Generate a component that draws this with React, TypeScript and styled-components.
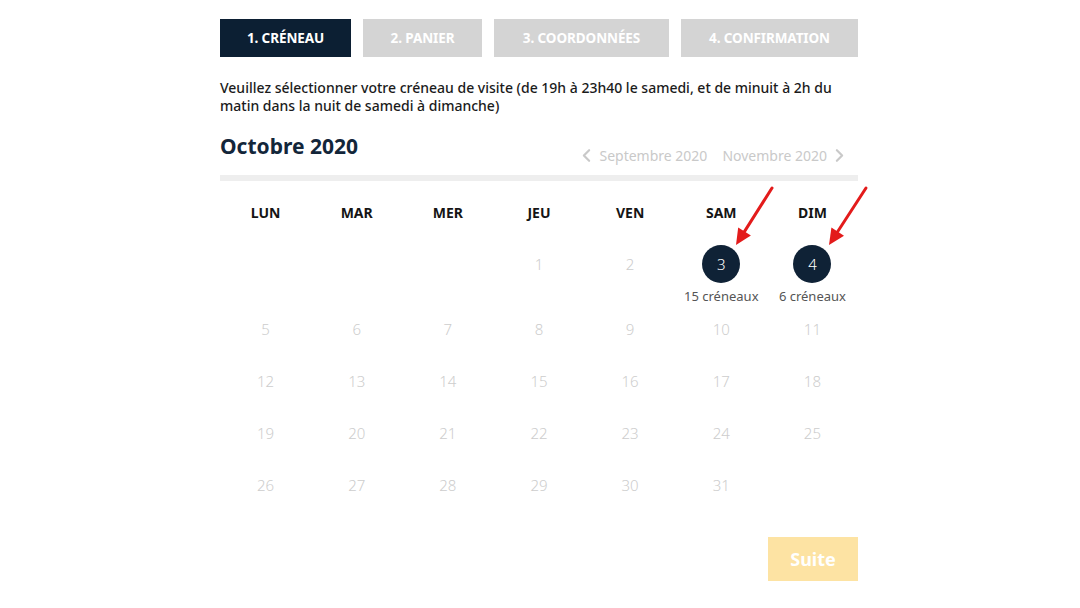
import React from "react";
import styled, { createGlobalStyle } from "styled-components";
import { ChevronLeft, ChevronRight } from "lucide-react";

const Global = createGlobalStyle`
  html, body { margin: 0; padding: 0; background: #ffffff; }
  body { font-family: "Noto Sans", "Open Sans", sans-serif; color: #1d1d1d; }
`;

const Page = styled.div`
  position: relative;
  width: 638px;
  margin-left: 220px;
  padding-top: 19px;
`;

const Steps = styled.div`
  display: flex;
  gap: 12px;
`;

const Step = styled.div<{ $w: number; $active?: boolean }>`
  width: ${(p) => p.$w}px;
  height: 38px;
  display: flex;
  align-items: center;
  justify-content: center;
  background: ${(p) => (p.$active ? "#0c1f33" : "#d4d4d4")};
  color: #ffffff;
  font-size: 13.5px;
  font-weight: 700;
  letter-spacing: -0.1px;
  text-transform: uppercase;
`;

const Intro = styled.p`
  margin: 22px 0 0;
  font-size: 14px;
  line-height: 18px;
  font-weight: 500;
  color: #1b1b1b;
  letter-spacing: 0;
  white-space: nowrap;
`;

const Header = styled.div`
  display: flex;
  justify-content: space-between;
  align-items: flex-end;
  margin-top: 19px;
`;

const Month = styled.h2`
  margin: 0;
  font-size: 21px;
  line-height: 24px;
  font-weight: 700;
  color: #13263a;
`;

const Nav = styled.div`
  display: flex;
  align-items: center;
  margin-bottom: -8px;
  margin-right: 8px;
  color: #c9c9c9;
  font-size: 14px;
  line-height: 18px;
`;

const NavLink = styled.span<{ $gap?: number }>`
  display: inline-flex;
  align-items: center;
  gap: 2px;
  margin-left: ${(p) => p.$gap ?? 0}px;
`;

const Rule = styled.div`
  height: 6px;
  background: #eeeeee;
  margin-top: 17px;
`;

const Grid = styled.div`
  display: grid;
  grid-template-columns: repeat(7, 1fr);
  row-gap: 7px;
  margin-top: 22px;
`;

const DayName = styled.div`
  text-align: center;
  font-size: 14px;
  line-height: 20px;
  font-weight: 700;
  color: #151515;
  padding-bottom: 15px;
`;

const Cell = styled.div`
  display: flex;
  flex-direction: column;
  align-items: center;
  min-height: 45px;
`;

const Num = styled.div<{ $open?: boolean }>`
  width: 38px;
  height: 38px;
  border-radius: 50%;
  display: flex;
  align-items: center;
  justify-content: center;
  font-size: 15px;
  font-weight: 300;
  color: ${(p) => (p.$open ? "#ffffff" : "#cdcdcd")};
  background: ${(p) => (p.$open ? "#0f2236" : "transparent")};
`;

const Slots = styled.div`
  margin-top: 6px;
  font-size: 13px;
  line-height: 14px;
  color: #555555;
  white-space: nowrap;
`;

const Footer = styled.div`
  display: flex;
  justify-content: flex-end;
  margin-top: 26px;
`;

const Next = styled.button`
  width: 90px;
  height: 44px;
  border: none;
  padding: 0;
  background: #fde3a3;
  color: #ffffff;
  font-family: inherit;
  font-size: 18px;
  font-weight: 700;
`;

const Arrows = styled.svg`
  position: absolute;
  left: 0;
  top: 0;
  width: 100%;
  height: 100%;
  overflow: visible;
  pointer-events: none;
`;

const days = ["LUN", "MAR", "MER", "JEU", "VEN", "SAM", "DIM"];
const slots: Record<number, string> = { 3: "15 créneaux", 4: "6 créneaux" };

const cells: (number | null)[] = [null, null, null];
for (let d = 1; d <= 31; d++) cells.push(d);

function Arrow({ x1, y1, x2, y2 }: { x1: number; y1: number; x2: number; y2: number }) {
  const dx = x2 - x1;
  const dy = y2 - y1;
  const len = Math.hypot(dx, dy);
  const ux = dx / len;
  const uy = dy / len;
  const head = 16;
  const half = 7.5;
  const bx = x2 - ux * head;
  const by = y2 - uy * head;
  const px = -uy * half;
  const py = ux * half;
  return (
    <g>
      <line x1={x1} y1={y1} x2={bx + ux * 2} y2={by + uy * 2} stroke="#e31b1b" strokeWidth={3} strokeLinecap="round" />
      <polygon points={`${x2},${y2} ${bx + px},${by + py} ${bx - px},${by - py}`} fill="#e31b1b" />
    </g>
  );
}

export default function App() {
  return (
    <>
      <Global />
      <Page>
        <Steps>
          <Step $w={131} $active>1. Créneau</Step>
          <Step $w={119}>2. Panier</Step>
          <Step $w={175}>3. Coordonnées</Step>
          <Step $w={177}>4. Confirmation</Step>
        </Steps>
        <Intro>
          Veuillez sélectionner votre créneau de visite (de 19h à 23h40 le samedi, et de minuit à 2h du
          <br />
          matin dans la nuit de samedi à dimanche)
        </Intro>
        <Header>
          <Month>Octobre 2020</Month>
          <Nav>
            <NavLink>
              <ChevronLeft size={21} strokeWidth={2.5} />
              Septembre 2020
            </NavLink>
            <NavLink $gap={15}>
              Novembre 2020
              <ChevronRight size={21} strokeWidth={2.5} />
            </NavLink>
          </Nav>
        </Header>
        <Rule />
        <Grid>
          {days.map((d) => (
            <DayName key={d}>{d}</DayName>
          ))}
          {cells.map((d, i) => (
            <Cell key={i}>
              {d !== null && (
                <>
                  <Num $open={!!slots[d]}>{d}</Num>
                  {slots[d] && <Slots>{slots[d]}</Slots>}
                </>
              )}
            </Cell>
          ))}
        </Grid>
        <Footer>
          <Next>Suite</Next>
        </Footer>
        <Arrows>
          <Arrow x1={552} y1={188} x2={516} y2={245} />
          <Arrow x1={646} y1={188} x2={609} y2={245} />
        </Arrows>
      </Page>
    </>
  );
}
